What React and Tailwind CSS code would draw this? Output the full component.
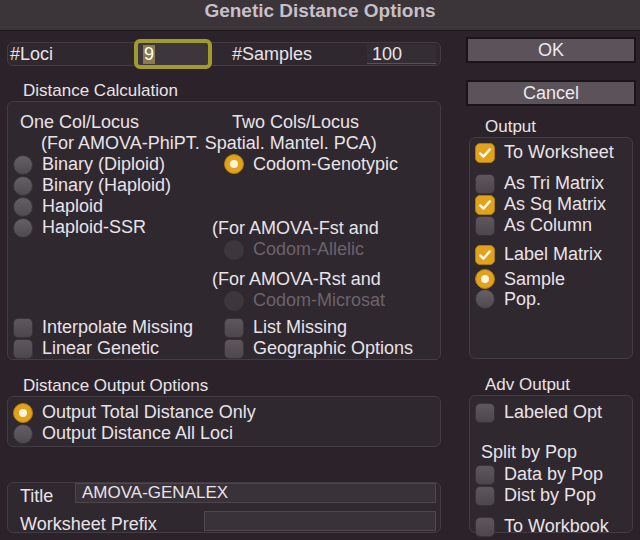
import React from 'react';

const Radio = ({ checked, disabled }) => {
    if (checked) {
        return (
            <div className="w-[20px] h-[20px] shrink-0 rounded-full bg-[#e2a31b] border border-[#b07c10] flex items-center justify-center">
                <div className="w-[8px] h-[8px] rounded-full bg-[#fbf3e2]" />
            </div>
        );
    }
    if (disabled) {
        return <div className="w-[20px] h-[20px] shrink-0 rounded-full bg-[#3d363c]" />;
    }
    return <div className="w-[20px] h-[20px] shrink-0 rounded-full bg-gradient-to-b from-[#656065] to-[#4f4a4f] border border-[#3a343a]" />;
};

const Check = ({ checked }) => {
    if (checked) {
        return (
            <div className="w-[20px] h-[20px] shrink-0 rounded-[5px] bg-[#e2a31b] border border-[#b07c10] flex items-center justify-center">
                <svg width="16" height="16" viewBox="0 0 16 16" fill="none">
                    <path d="M3.2 8.4 L6.4 11.6 L12.8 4.4" stroke="#fdf7ea" strokeWidth="2.4" strokeLinecap="round" strokeLinejoin="round" />
                </svg>
            </div>
        );
    }
    return <div className="w-[20px] h-[20px] shrink-0 rounded-[5px] bg-gradient-to-b from-[#5e585e] to-[#4d474d] border border-[#3a343a]" />;
};

const Row = ({ children, className = '' }) => (
    <div className={`flex items-center h-[21px] leading-[21px] whitespace-nowrap ${className}`}>{children}</div>
);

const Opt = ({ control, label, disabled, gap = 'gap-[9px]', className = '' }) => (
    <Row className={`${gap} ${className}`}>
        {control}
        <span className={disabled ? 'text-[#6b636a]' : ''}>{label}</span>
    </Row>
);

const GroupLabel = ({ children, className = '' }) => (
    <div className={`h-[21px] leading-[21px] text-[17px] whitespace-nowrap ${className}`}>{children}</div>
);

const boxCls = 'rounded-[6px] border border-[#443c43] bg-[#30282f]';

export default function App() {
    return (
        <div className="w-[640px] h-[540px] overflow-hidden bg-[#2b2329] text-[#e8e3e8] text-[18px] font-['Liberation_Sans',Arial,sans-serif]">
            <div className="h-[31px] bg-[#3b3439] border-b border-[#1d171b] flex items-start justify-center">
                <span className="text-[19px] font-bold text-[#c7c0c6] leading-[22px] mt-[0px]">Genetic Distance Options</span>
            </div>

            <div className="flex">
                {/* left column */}
                <div className="ml-[7px] w-[434px] flex flex-col">
                    <div className={`mt-[11px] h-[24px] flex items-center ${boxCls}`}>
                        <span className="pl-[2px] w-[130px]">#Loci</span>
                        <div className="w-[70px] h-[22px] bg-[#3e363d] outline-4 outline-[#a09c2c] rounded-[2px] flex items-center pl-[5px]">
                            <span className="bg-[#8a7a4e] text-white leading-[19px] px-[1px]">9</span>
                        </div>
                        <span className="ml-[24px] w-[135px]">#Samples</span>
                        <div className="w-[69px] h-[20px] bg-[#352d34] border-b border-[#5a5259] flex items-center pl-[5px] leading-[20px]">100</div>
                    </div>

                    <GroupLabel className="mt-[14px] pl-[16px]">Distance Calculation</GroupLabel>
                    <div className={`h-[259px] flex ${boxCls}`}>
                        <div className="w-[204px] flex flex-col pt-[10px]">
                            <Row className="pl-[12px]">One Col/Locus</Row>
                            <Row className="pl-[33px]">(For AMOVA-PhiPT. Spatial. Mantel. PCA)</Row>
                            <Opt className="pl-[5px]" control={<Radio />} label="Binary (Diploid)" />
                            <Opt className="pl-[5px]" control={<Radio />} label="Binary (Haploid)" />
                            <Opt className="pl-[5px]" control={<Radio />} label="Haploid" />
                            <Opt className="pl-[5px]" control={<Radio />} label="Haploid-SSR" />
                            <div className="h-[80px]" />
                            <Opt className="pl-[5px]" control={<Check />} label="Interpolate Missing" />
                            <Opt className="pl-[5px]" control={<Check />} label="Linear Genetic" />
                        </div>
                        <div className="flex-1 flex flex-col pt-[10px]">
                            <Row className="pl-[20px]">Two Cols/Locus</Row>
                            <Row />
                            <Opt className="pl-[12px]" control={<Radio checked />} label="Codom-Genotypic" />
                            <div className="h-[44px]" />
                            <Row>(For AMOVA-Fst and</Row>
                            <Opt className="pl-[12px]" control={<Radio disabled />} label="Codom-Allelic" disabled />
                            <div className="h-[9px]" />
                            <Row>(For AMOVA-Rst and</Row>
                            <Opt className="pl-[12px]" control={<Radio disabled />} label="Codom-Microsat" disabled />
                            <div className="h-[6px]" />
                            <Opt className="pl-[12px]" control={<Check />} label="List Missing" />
                            <Opt className="pl-[12px]" control={<Check />} label="Geographic Options" />
                        </div>
                    </div>

                    <GroupLabel className="mt-[15px] pl-[16px]">Distance Output Options</GroupLabel>
                    <div className={`h-[51px] pt-[5px] pl-[5px] flex flex-col ${boxCls}`}>
                        <Opt control={<Radio checked />} label="Output Total Distance Only" />
                        <Opt control={<Radio />} label="Output Distance All Loci" />
                    </div>

                    <div className={`mt-[35px] h-[51px] flex flex-col ${boxCls}`}>
                        <div className="flex items-start">
                            <span className="w-[67px] pl-[12px] mt-[3px] leading-[20px]">Title</span>
                            <div className="w-[361px] h-[20px] bg-[#3a3239] border border-[#4e464d] pl-[6px] leading-[18px] text-[17px]">AMOVA-GENALEX</div>
                        </div>
                        <div className="flex items-start mt-[5px]">
                            <span className="w-[196px] pl-[12px] mt-[3px] leading-[20px]">Worksheet Prefix</span>
                            <div className="w-[232px] h-[20px] bg-[#3a3239] border border-[#4e464d]" />
                        </div>
                    </div>
                </div>

                {/* right column */}
                <div className="ml-[25px] w-[170px] flex flex-col">
                    <button className="mt-[6px] h-[26px] bg-[#5b525a] border-2 border-[#1b1519] text-[18px] text-[#ece8ec] leading-[22px]">OK</button>
                    <button className="mt-[17px] h-[26px] bg-[#5b525a] border-2 border-[#1b1519] text-[18px] text-[#ece8ec] leading-[22px]">Cancel</button>

                    <GroupLabel className="mt-[10px] pl-[19px]">Output</GroupLabel>
                    <div className={`mx-[3px] h-[222px] pt-[4px] pl-[5px] flex flex-col ${boxCls}`}>
                        <Opt control={<Check checked />} label="To Worksheet" />
                        <Opt className="mt-[10px]" control={<Check />} label="As Tri Matrix" />
                        <Opt control={<Check checked />} label="As Sq Matrix" />
                        <Opt control={<Check />} label="As Column" />
                        <Opt className="mt-[8px]" control={<Check checked />} label="Label Matrix" />
                        <Opt className="mt-[4px] !h-[20px]" control={<Radio checked />} label="Sample" />
                        <Opt className="!h-[20px]" control={<Radio />} label="Pop." />
                    </div>

                    <GroupLabel className="mt-[15px] pl-[19px]">Adv Output</GroupLabel>
                    <div className={`mx-[3px] h-[138px] pt-[6px] pl-[5px] flex flex-col ${boxCls}`}>
                        <Opt control={<Check />} label="Labeled Opt" />
                        <Row className="mt-[19px] pl-[6px]">Split by Pop</Row>
                        <Opt className="mt-[1px]" control={<Check />} label="Data by Pop" />
                        <Opt control={<Check />} label="Dist by Pop" />
                        <Opt className="mt-[10px]" control={<Check />} label="To Workbook" />
                    </div>
                </div>
            </div>
        </div>
    );
}
